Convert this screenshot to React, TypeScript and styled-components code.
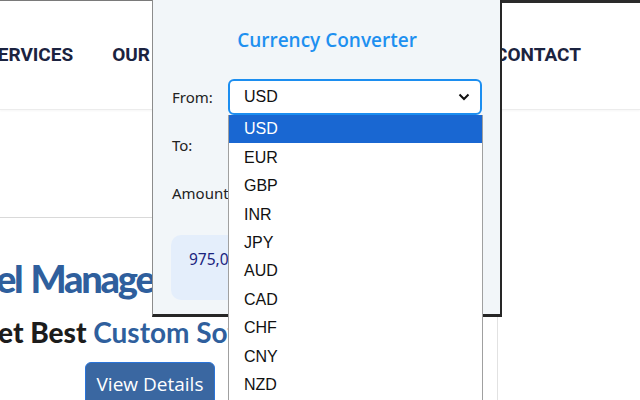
import React from 'react'
import styled, { createGlobalStyle } from 'styled-components'

const GlobalStyle = createGlobalStyle`
    html, body {
        margin: 0;
        padding: 0;
        background: #ffffff;
    }
    * {
        box-sizing: border-box;
    }
`
const Page = styled.div`
    position: relative;
    width: 640px;
    height: 400px;
    overflow: hidden;
    background: #ffffff;
`
const TopEdge = styled.div`
    display: flex;
    height: 3px;
`
const EdgeLeft = styled.div`
    flex: 1;
    height: 1px;
    background: #7a7a7a;
`
const EdgeRight = styled.div`
    width: 139px;
    height: 3px;
    background: #2a2a2a;
`
const Header = styled.header`
    height: 107px;
    display: flex;
    align-items: center;
    border-bottom: 1px solid #ececec;
    box-shadow: 0 1px 2px rgba(0, 0, 0, 0.04);
    overflow: hidden;
`
const Nav = styled.nav`
    flex: 1;
    display: flex;
    gap: 39px;
    margin-left: -14px;
    padding: 0 59px 3px 0;
    > a:last-child {
        margin-left: auto;
    }
`
const NavItem = styled.a`
    font-family: Roboto, "Liberation Sans", sans-serif;
    font-weight: 700;
    font-size: 19px;
    color: #1b2340;
    white-space: nowrap;
    text-decoration: none;
`
const Band = styled.div`
    height: 108px;
    width: 470px;
    border-bottom: 1px solid #d9d9d9;
`
const Hero = styled.section`
    display: flex;
    flex-direction: column;
    align-items: flex-start;
    padding-top: 36px;
    font-family: Lato, "Open Sans", sans-serif;
`
const Title = styled.h1`
    margin: 0 0 0 -62px;
    font-size: 38px;
    letter-spacing: -2.2px;
    word-spacing: 2px;
    font-weight: 900;
    line-height: 48px;
    color: #2f5f9d;
    white-space: nowrap;
`
const Sub = styled.h2`
    margin: 13px 0 0 -22px;
    font-size: 28px;
    font-weight: 900;
    line-height: 34px;
    color: #1c1c1c;
    white-space: nowrap;
`
const Accent = styled.span`
    color: #2f5f9d;
    font-weight: 700;
`
const Button = styled.button`
    margin: 13px 0 0 85px;
    width: 130px;
    height: 48px;
    border: 1px solid #2a74d8;
    border-radius: 6px;
    background: #3a67a1;
    color: #ffffff;
    font-family: "Open Sans", sans-serif;
    font-size: 19px;
    padding: 0 0 4px;
`
const RightRule = styled.div`
    position: absolute;
    left: 497px;
    top: 316px;
    width: 1px;
    height: 84px;
    background: #e2e2e2;
`
const Popup = styled.div`
    position: absolute;
    left: 152px;
    top: 0;
    width: 350px;
    height: 317px;
    background: #f2f6f9;
    border-left: 1px solid #8c8c8c;
    border-right: 2px solid #262626;
    border-bottom: 3px solid #262626;
    padding: 27px 18px 0 19px;
    font-family: "Noto Sans", Inter, sans-serif;
`
const Heading = styled.div`
    text-align: center;
    font-family: "Open Sans", sans-serif;
    font-weight: 600;
    font-size: 19px;
    color: #1e90f0;
    margin-bottom: 26px;
`
const Row = styled.div`
    display: flex;
    align-items: center;
    height: 36px;
    margin-bottom: 12px;
`
const Label = styled.label`
    width: 56px;
    font-size: 15px;
    color: #222;
    white-space: nowrap;
`
const Select = styled.div<{ $focus?: boolean }>`
    flex: 1;
    height: 36px;
    display: flex;
    align-items: center;
    justify-content: space-between;
    padding: 0 10px 0 14px;
    background: #fff;
    border: ${p => (p.$focus ? '2px solid #1c8ef0' : '1px solid #bdbdbd')};
    border-radius: 6px;
    font-family: "Liberation Sans", Arial, sans-serif;
    font-size: 16px;
    color: #111;
`
const Result = styled.div`
    margin-top: 24px;
    margin-left: -1px;
    height: 65px;
    border-radius: 10px;
    background: #e4eefb;
    display: flex;
    align-items: center;
    padding: 0 0 18px 18px;
    font-size: 15.5px;
    color: #1a237e;
`
const List = styled.ul`
    position: absolute;
    left: 228px;
    top: 115px;
    width: 255px;
    height: 300px;
    margin: 0;
    padding: 0;
    list-style: none;
    background: #fff;
    border: 1px solid #a0a0a0;
    border-top: none;
    font-family: "Liberation Sans", Arial, sans-serif;
    font-size: 16px;
`
const Option = styled.li<{ $active?: boolean }>`
    height: 28.45px;
    display: flex;
    align-items: center;
    padding-left: 15px;
    color: ${p => (p.$active ? '#ffffff' : '#111')};
    background: ${p => (p.$active ? '#1967d2' : 'transparent')};
`

const Chevron = () => (
  <svg width="12" height="8" viewBox="0 0 12 8">
    <path d="M1.5 1.5 L6 6 L10.5 1.5" fill="none" stroke="#111" strokeWidth="2" />
  </svg>
)

const currencies = ['USD', 'EUR', 'GBP', 'INR', 'JPY', 'AUD', 'CAD', 'CHF', 'CNY', 'NZD', 'SGD']

export default function App() {
  return (
    <>
      <GlobalStyle />
      <Page>
        <TopEdge>
          <EdgeLeft />
          <EdgeRight />
        </TopEdge>
        <Header>
          <Nav>
            <NavItem>SERVICES</NavItem>
            <NavItem>OUR PRODUCTS</NavItem>
            <NavItem>CONTACT</NavItem>
          </Nav>
        </Header>
        <Band />
        <Hero>
          <Title>Hotel Management</Title>
          <Sub>
            Get Best <Accent>Custom Software</Accent>
          </Sub>
          <Button>View Details</Button>
        </Hero>
        <RightRule />

        <Popup>
          <Heading>Currency Converter</Heading>
          <Row>
            <Label>From:</Label>
            <Select $focus>
              USD
              <Chevron />
            </Select>
          </Row>
          <Row>
            <Label>To:</Label>
            <Select>
              INR
              <Chevron />
            </Select>
          </Row>
          <Row>
            <Label>Amount:</Label>
            <Select>11700</Select>
          </Row>
          <Result>975,000.00 INR</Result>
        </Popup>

        <List>
          {currencies.map((c, i) => (
            <Option key={c} $active={i === 0}>
              {c}
            </Option>
          ))}
        </List>
      </Page>
    </>
  )
}
